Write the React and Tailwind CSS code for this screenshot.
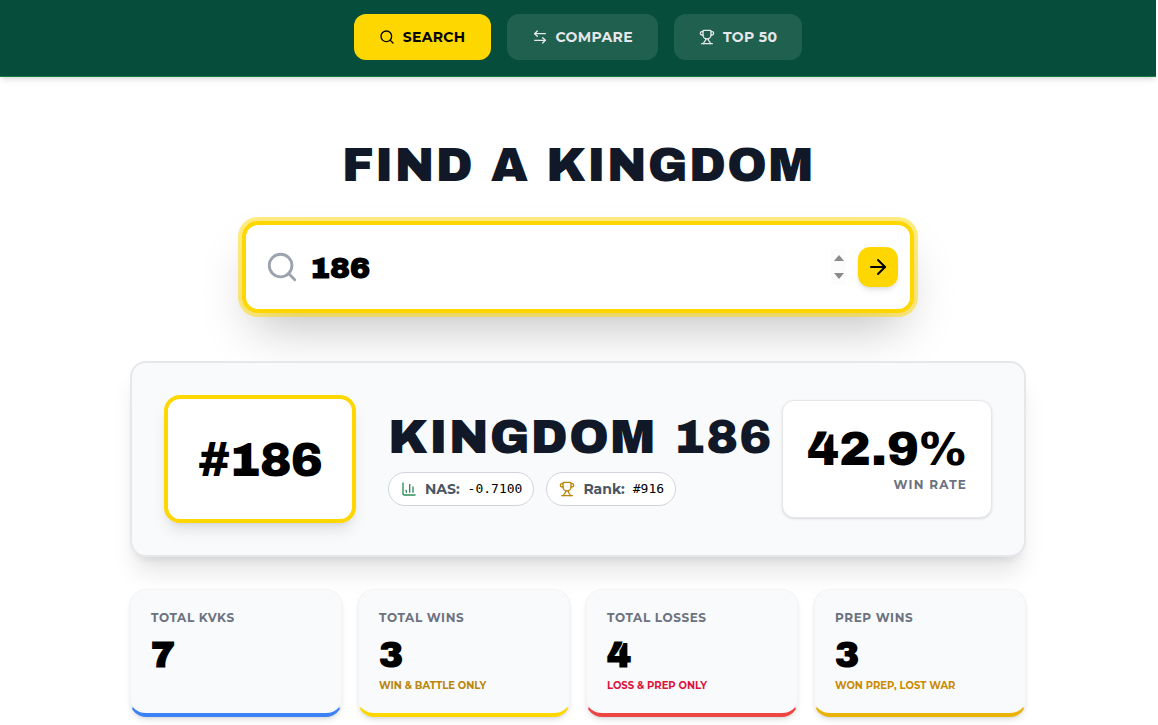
import { Search, ArrowLeftRight, Trophy, ArrowRight, ChartColumn } from 'lucide-react';

const displayFont = "font-['Archivo_Black','Inter',sans-serif]";

const stats = [
  { label: 'TOTAL KVKS', value: '7', note: '', border: 'border-b-[#3b82f6]', noteColor: '' },
  { label: 'TOTAL WINS', value: '3', note: 'WIN & BATTLE ONLY', border: 'border-b-[#ffd700]', noteColor: 'text-[#b8860b]' },
  { label: 'TOTAL LOSSES', value: '4', note: 'LOSS & PREP ONLY', border: 'border-b-[#ef4444]', noteColor: 'text-[#dc143c]' },
  { label: 'PREP WINS', value: '3', note: 'WON PREP, LOST WAR', border: 'border-b-[#eab308]', noteColor: 'text-[#ca8a04]' },
];

function NavButton({ icon: Icon, label, active }) {
  return (
    <button
      className={
        active
          ? 'h-[46px] px-[25px] flex items-center gap-2 rounded-xl bg-[#ffd700] text-black text-sm font-bold tracking-[0.025em]'
          : 'h-[46px] px-[25px] flex items-center gap-2 rounded-xl bg-white/10 text-[#e5e7eb] text-sm font-bold tracking-[0.025em]'
      }
    >
      <Icon size={16} strokeWidth={2} />
      {label}
    </button>
  );
}

export default function App() {
  return (
    <div className="w-[1156px] h-[725px] overflow-hidden bg-white font-['Montserrat','Inter',sans-serif]">
      <header className="h-[77px] bg-[#064e3b] border-b border-[#15803d] shadow-md flex justify-center gap-4 pt-[14px]">
        <NavButton icon={Search} label="SEARCH" active />
        <NavButton icon={ArrowLeftRight} label="COMPARE" />
        <NavButton icon={Trophy} label="TOP 50" />
      </header>

      <main className="w-[896px] mx-auto pt-[60px]">
        <h1 className={`${displayFont} font-normal text-5xl leading-[56px] text-center text-[#111827] tracking-[1px]`}>
          FIND A KINGDOM
        </h1>

        <div className="w-[672px] h-[92px] mx-auto mt-[28px] flex items-center pl-[19px] pr-3 bg-white border-4 border-[#ffd700] rounded-2xl ring-4 ring-[#ffd700]/50 shadow-2xl">
          <Search size={34} strokeWidth={2} className="text-[#9ca3af]" />
          <span className={`${displayFont} font-bold ml-[11px] pt-[2px] flex-1 text-3xl text-black`}>186</span>
          <div className="w-[15px] h-[36px] mr-3 flex flex-col items-center justify-center gap-[12px] bg-[#fcfcfc]">
            <span className="w-0 h-0 border-x-[5px] border-x-transparent border-b-[6px] border-b-[#8a8a8a]" />
            <span className="w-0 h-0 border-x-[5px] border-x-transparent border-t-[6px] border-t-[#8a8a8a]" />
          </div>
          <button className="w-10 h-10 flex items-center justify-center rounded-xl bg-[#ffd700] text-black shadow-md">
            <ArrowRight size={24} strokeWidth={2} />
          </button>
        </div>

        <section className="mt-[48px] h-[196px] flex items-center px-8 bg-[#f9fafb] border-2 border-[#e5e7eb] rounded-2xl shadow-xl">
          <div className="w-[192px] h-[128px] shrink-0 pt-[2px] flex items-center justify-center bg-white border-4 border-[#ffd700] rounded-2xl shadow-lg">
            <span className={`${displayFont} font-normal text-5xl text-black tracking-[-1px]`}>#186</span>
          </div>
          <div className="ml-8 flex-1">
            <h2 className={`${displayFont} font-normal text-5xl leading-[50px] text-[#111827] tracking-[1px] whitespace-nowrap`}>
              KINGDOM 186
            </h2>
            <div className="mt-[10px] flex gap-3">
              <div className="h-[34px] pl-3 pr-[11px] flex items-center gap-2 bg-white border border-[#d1d5db] rounded-full text-sm">
                <ChartColumn size={16} className="text-[#2e8b57]" />
                <span className="font-bold text-[#4b5563]">NAS:</span>
                <span className="font-['DejaVu_Sans_Mono',monospace] text-[13px] text-black">-0.7100</span>
              </div>
              <div className="h-[34px] pl-3 pr-[11px] flex items-center gap-2 bg-white border border-[#d1d5db] rounded-full text-sm">
                <Trophy size={16} className="text-[#b8860b]" />
                <span className="font-bold text-[#4b5563]">Rank:</span>
                <span className="font-['DejaVu_Sans_Mono',monospace] text-[13px] text-black">#916</span>
              </div>
            </div>
          </div>
          <div className="w-[210px] h-[118px] shrink-0 px-6 pt-5 text-right bg-white border border-[#e5e7eb] rounded-xl shadow-sm">
            <div className={`${displayFont} font-normal text-5xl leading-[56px] text-black whitespace-nowrap`}>42.9%</div>
            <div className="text-xs font-bold tracking-[0.1em] text-[#6b7280]">WIN RATE</div>
          </div>
        </section>

        <div className="mt-[32px] grid grid-cols-4 gap-4">
          {stats.map((s) => (
            <div key={s.label} className={`h-[128px] px-5 pt-5 bg-[#f9fafb] border border-[#f3f4f6] border-b-4 ${s.border} rounded-2xl shadow-md`}>
              <div className="text-xs font-bold tracking-[0.05em] text-[#6b7280]">{s.label}</div>
              <div className={`${displayFont} font-bold mt-[7px] text-4xl leading-[44px] text-black`}>{s.value}</div>
              {s.note && <div className={`mt-[1px] text-[10px] font-bold ${s.noteColor}`}>{s.note}</div>}
            </div>
          ))}
        </div>
      </main>
    </div>
  );
}
